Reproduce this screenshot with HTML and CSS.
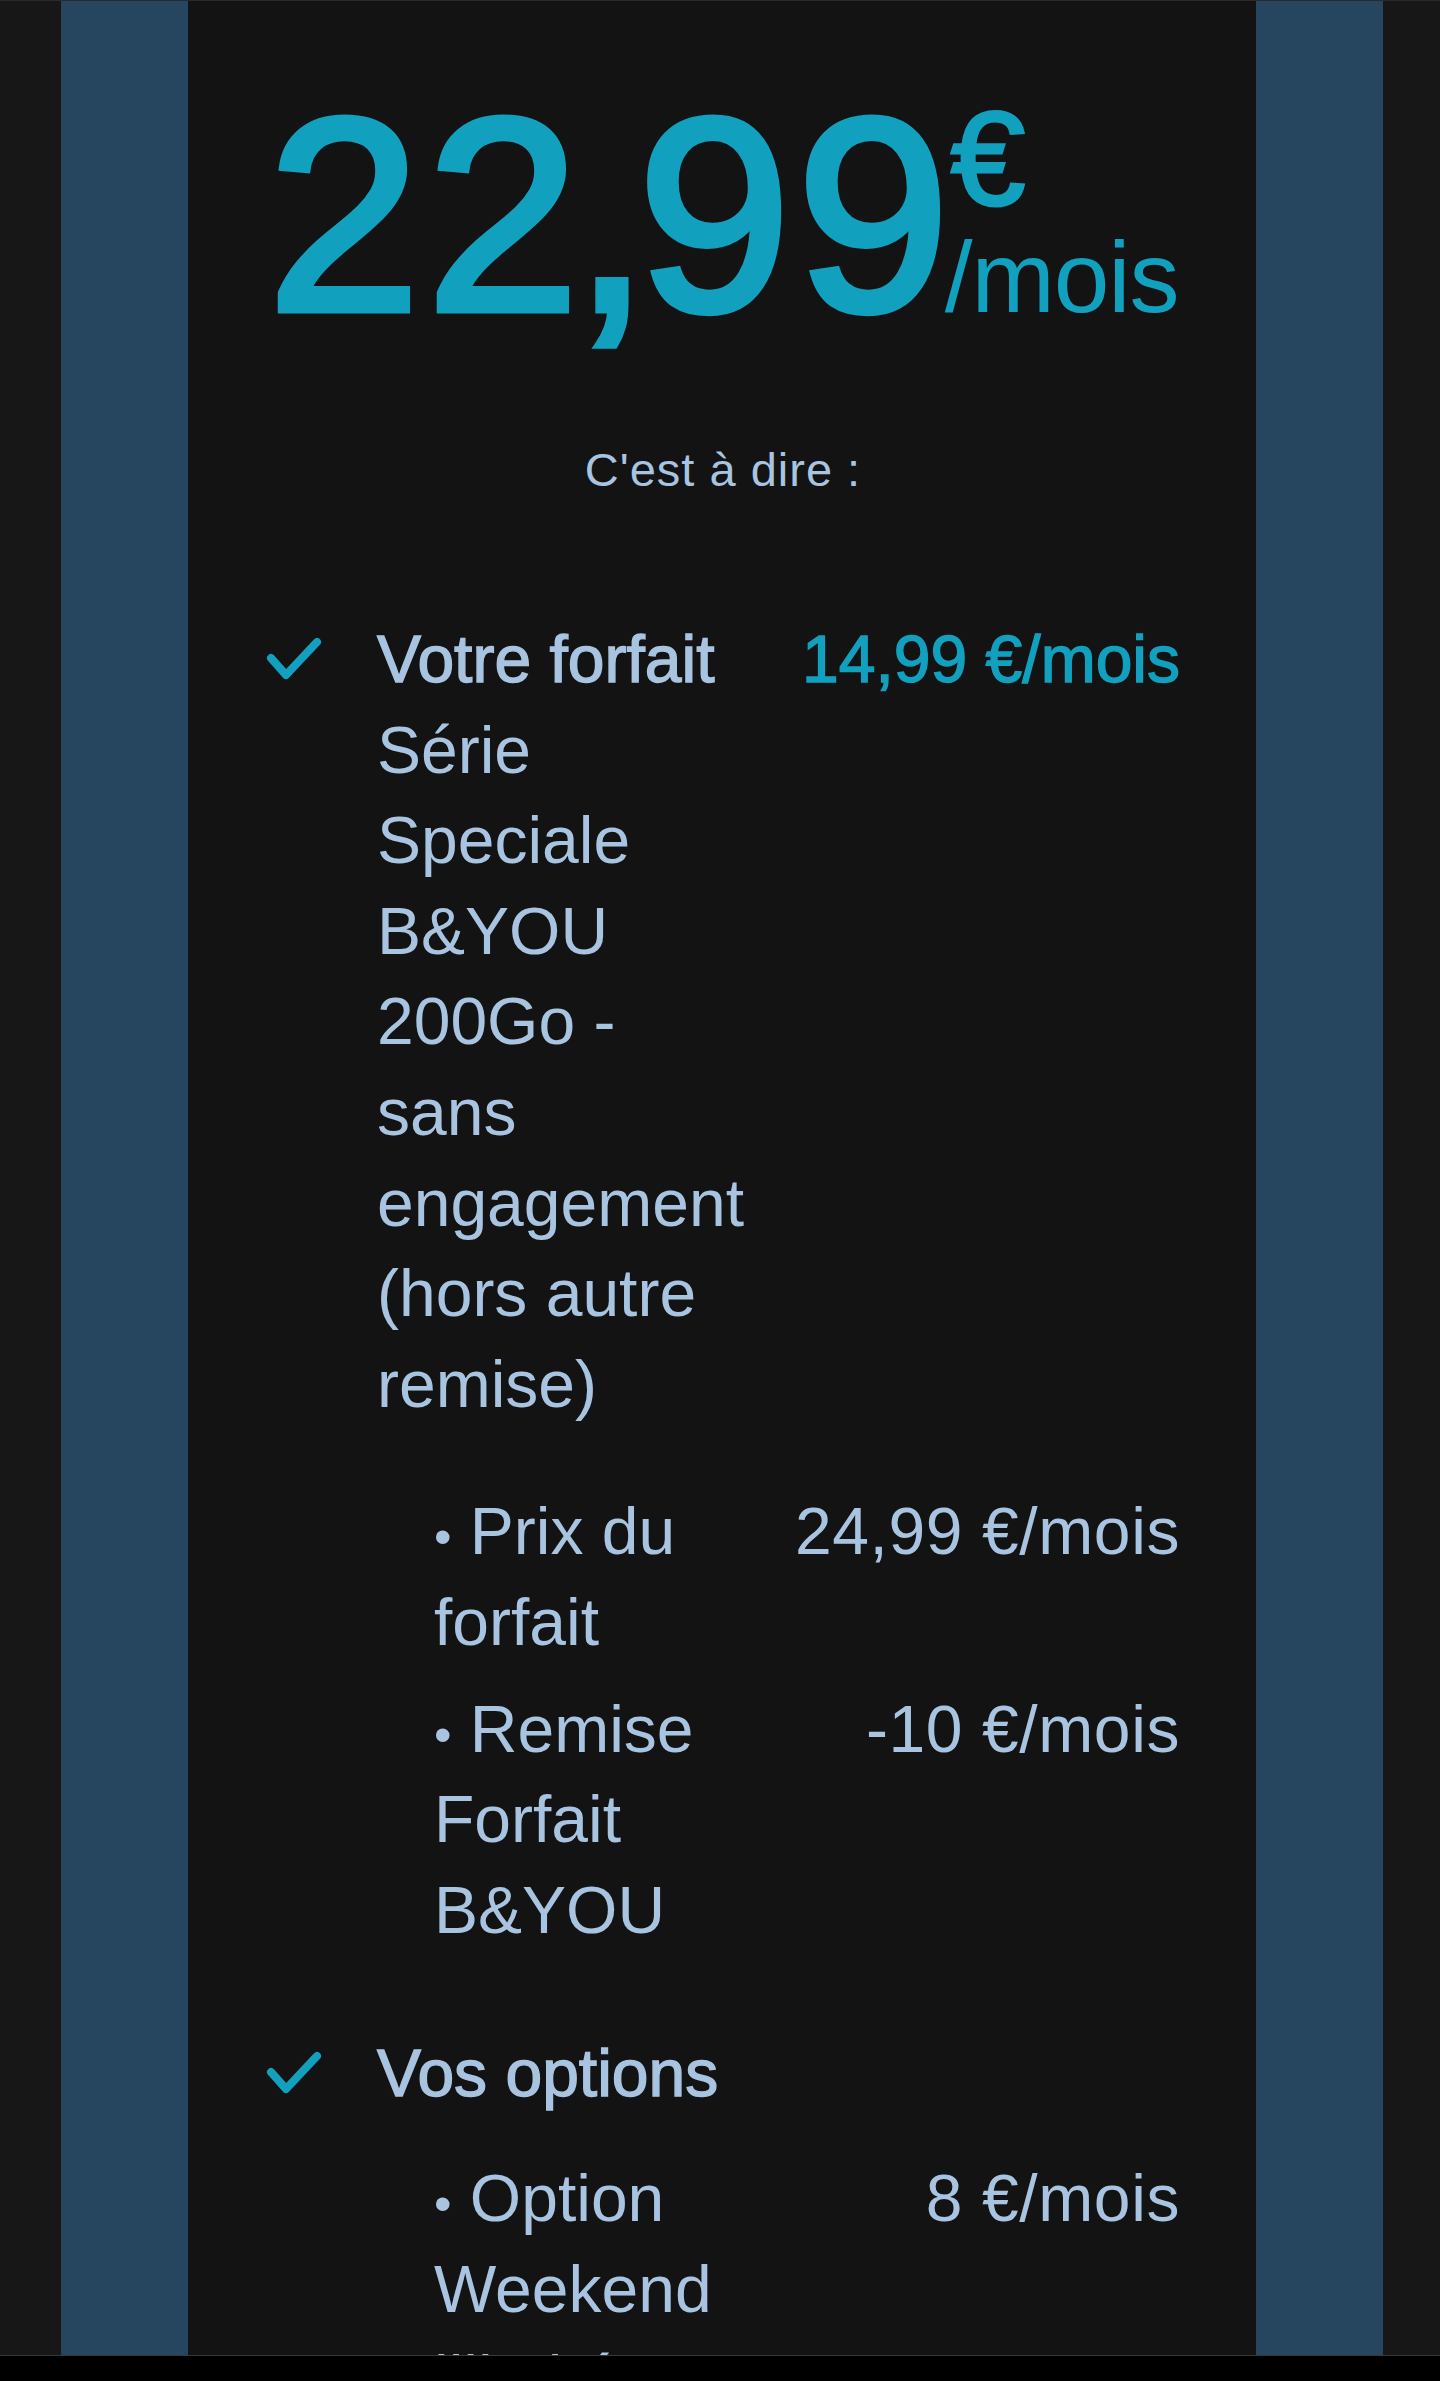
FILE: index.html
```html
<!DOCTYPE html>
<html lang="fr">
<head>
<meta charset="utf-8">
<title>Récapitulatif de votre offre</title>
<link rel="stylesheet" href="styles.css">
</head>
<body>
<div class="screen">
  <div class="edge"></div>
  <div class="bar"></div>
  <main class="content">
    <div class="price">
      <span class="amount">22<span class="comma">,</span>99</span>
      <span class="unit"><span class="cur">€</span><span class="per">/mois</span></span>
    </div>
    <p class="intro">C'est à dire :</p>
    <ul class="items">
      <li class="item">
        <svg class="check" viewBox="0 0 56 46" aria-hidden="true"><path d="M5 23 L20 40 L51 7"/></svg>
        <div class="item-body">
          <div class="row">
            <div class="label"><span class="head">Votre forfait</span><br>Série Speciale B&amp;YOU 200Go - sans engagement (hors autre remise)</div>
            <div class="value value-main">14,99 €/mois</div>
          </div>
          <ul class="subs">
            <li class="sub"><span class="label"><span class="bullet">•</span> Prix du forfait</span><span class="value">24,99 €/mois</span></li>
            <li class="sub"><span class="label"><span class="bullet">•</span> Remise Forfait B&amp;YOU</span><span class="value">-10 €/mois</span></li>
          </ul>
        </div>
      </li>
      <li class="item item-options">
        <svg class="check" viewBox="0 0 56 46" aria-hidden="true"><path d="M5 23 L20 40 L51 7"/></svg>
        <div class="item-body">
          <div class="row">
            <div class="label"><span class="head">Vos options</span></div>
          </div>
          <ul class="subs">
            <li class="sub"><span class="label"><span class="bullet">•</span> Option Weekend illimité</span><span class="value">8 €/mois</span></li>
          </ul>
        </div>
      </li>
    </ul>
  </main>
  <div class="bar"></div>
  <div class="edge"></div>
</div>
</body>
</html>
```

FILE: styles.css
```css
html, body {
  margin: 0;
  padding: 0;
  background: #000;
}

body {
  font-family: "Liberation Sans", Arial, sans-serif;
}

.screen {
  display: grid;
  grid-template-columns: 61px 127px 1fr 127px 57px;
  height: 2354px;
  border-top: 1px solid #2a2a2a;
  border-bottom: 1px solid #383838;
  background: #171717;
  overflow: hidden;
}

.bar {
  background: #25465e;
}

.content {
  background: #131313;
  padding: 0 76px 0 78px;
  min-width: 0;
  overflow: hidden;
}

/* Price */
.price {
  display: flex;
  justify-content: center;
  align-items: flex-end;
  margin-top: 76px;
  color: #12a0bf;
}

.amount {
  font-size: 275px;
  line-height: 1;
  letter-spacing: 6px;
  -webkit-text-stroke: 7px #12a0bf;
}

.comma {
  margin-left: -12px;
  margin-right: -18px;
}

.unit {
  display: flex;
  flex-direction: column;
  padding-bottom: 25px;
  margin-left: -5px;
}

.cur {
  font-size: 134px;
  line-height: 1;
  -webkit-text-stroke: 3px #12a0bf;
  margin-bottom: 1px;
}

.per {
  font-size: 100px;
  line-height: 1;
  letter-spacing: -1px;
  margin-left: -6px;
}

.intro {
  margin: 90px 0 0;
  text-align: center;
  font-size: 47px;
  line-height: 56px;
  letter-spacing: 1px;
  color: #a8c4e0;
}

/* Items */
.items {
  list-style: none;
  margin: 116px 0 0;
  padding: 0;
  color: #a8c4e0;
  font-size: 66px;
  line-height: 90.6px;
}

.item {
  display: grid;
  grid-template-columns: 111px 1fr;
}

.item + .item {
  margin-top: 73px;
}

.check {
  width: 56px;
  height: 46px;
  margin: 21px 0 0 0;
  fill: none;
  stroke: #12a0bf;
  stroke-width: 8;
  stroke-linecap: round;
  stroke-linejoin: round;
}

.row {
  display: flex;
  justify-content: space-between;
  gap: 48px;
}

.label {
  flex: 1;
  min-width: 0;
}

.value {
  white-space: nowrap;
  text-align: right;
}

.head {
  -webkit-text-stroke: 1.4px #a8c4e0;
}

.value-main {
  color: #12a0bf;
  -webkit-text-stroke: 1.4px #12a0bf;
}

.subs {
  list-style: none;
  margin: 57px 0 0;
  padding: 0 0 0 57px;
}

.item-options .subs {
  margin-top: 34px;
}

.sub {
  display: flex;
  justify-content: space-between;
  gap: 40px;
}

.sub .value {
  letter-spacing: 0.6px;
}

.sub + .sub {
  margin-top: 16px;
}

.bullet {
  font-size: 50px;
  line-height: 0;
}
```
